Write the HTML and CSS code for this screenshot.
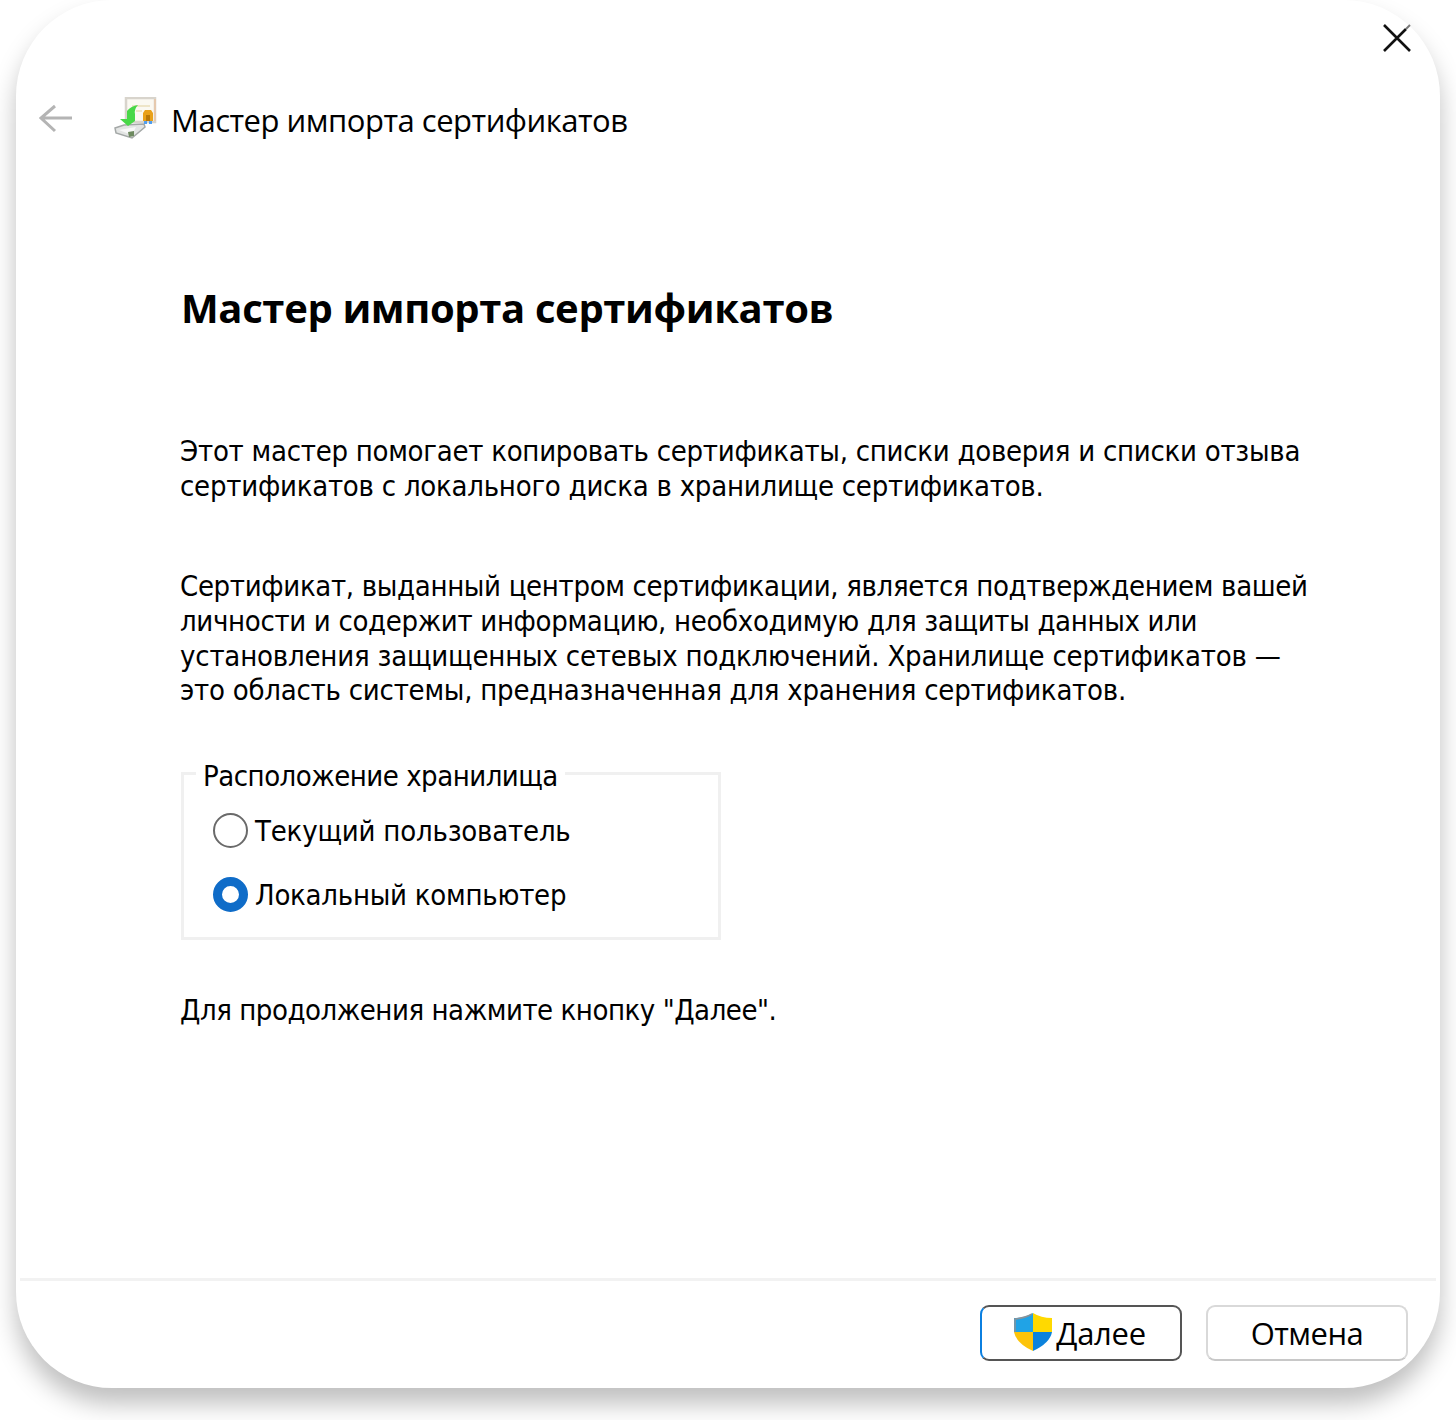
FILE: index.html
```html
<!DOCTYPE html>
<html lang="ru">
<head>
<meta charset="utf-8">
<title>Мастер импорта сертификатов</title>
<link rel="stylesheet" href="styles.css">
</head>
<body>
<main class="dialog">
  <div class="titlebar">
    <svg class="close" viewBox="0 0 28 28"><path d="M1 1L27 27M23 5L1 27"/><path class="tip" d="M23 5L27 1"/></svg>
  </div>
  <header class="header">
    <svg class="back" viewBox="0 0 34 30"><path d="M16 2L2 14L16 27M2 14H33"/></svg>
    <svg class="cert" viewBox="0 0 44 44">
      <path d="M12 1H41V25H12Z" fill="#fbf9f2" stroke="#d8d4cc" stroke-width="2.5"/>
      <path d="M41 2V24" stroke="#e6c9ae" stroke-width="2"/>
      <path d="M18 9H36M22 14H28" stroke="#eee5c8" stroke-width="2"/>
      <path d="M1 31L10 28L30 27L31 30L18 41L2 36Z" fill="#e3e5e4" stroke="#a4a8a7" stroke-width="1.5"/>
      <path d="M5 33L22 30L18 38Z" fill="#f8f8f8"/>
      <path d="M14 35L20 34L20 39L15 40Z" fill="#6e8a60"/>
      <path d="M24 8Q17 9 13 14V22H6L14 29L21 24V17Q20 12 24 8Z" fill="#48d848"/>
      <path d="M30 24H33V27H30ZM35 24H38V27H35Z" fill="#4f9ef0"/>
      <path d="M29 16L31 13H37L39 16V24H29Z" fill="#e9a11a"/>
      <path d="M32 18H36V24H32Z" fill="#b87808"/>
    </svg>
    <span class="caption">Мастер импорта сертификатов</span>
  </header>
  <section class="content">
    <h1 class="heading">Мастер импорта сертификатов</h1>
    <p class="text intro"><span class="fit-27">Этот мастер помогает копировать сертификаты, списки доверия и списки отзыва</span><br><span class="fit-24">сертификатов с локального диска в хранилище сертификатов.</span></p>
    <p class="text about"><span class="fit-33">Сертификат, выданный центром сертификации, является подтверждением вашей</span><br><span class="fit-33">личности и содержит информацию, необходимую для защиты данных или</span><br><span class="fit-20">установления защищенных сетевых подключений. Хранилище сертификатов —</span><br><span class="fit-24">это область системы, предназначенная для хранения сертификатов.</span></p>
    <fieldset class="group">
      <legend class="legend fit-50">Расположение хранилища</legend>
      <label class="option"><span class="radio"></span><span class="fit-20">Текущий пользователь</span></label>
      <label class="option"><span class="radio checked"></span><span class="fit-24">Локальный компьютер</span></label>
    </fieldset>
    <p class="text hint"><span class="fit-46">Для продолжения нажмите кнопку "Далее".</span></p>
  </section>
  <footer class="footer">
    <button class="button primary">
      <svg class="shield" viewBox="0 0 38 38">
        <path d="M19 0Q11 5 0 5V19H19Z" fill="#20a3e6"/>
        <path d="M19 0Q27 5 38 5V19H19Z" fill="#ffd900"/>
        <path d="M0 19H19V38Q2 30 0 19Z" fill="#fdc40a"/>
        <path d="M38 19H19V38Q36 30 38 19Z" fill="#0b82dc"/>
        <path d="M1 19V6Q11 5 18 1" fill="none" stroke="#8a9298" stroke-width="1.5"/>
      </svg>
      <span class="next">Далее</span>
    </button>
    <button class="button"><span class="cancel">Отмена</span></button>
  </footer>
</main>
</body>
</html>
```
FILE: styles.css
```css
* { box-sizing: border-box; }
body {
  margin: 0;
  height: 1420px;
  padding: 0 16px;
  background: #fff;
  color: #000;
  font-family: "Open Sans", "Noto Sans", sans-serif;
  overflow: hidden;
}
.dialog {
  display: flex;
  flex-direction: column;
  height: 1388px;
  border-radius: 96px;
  background: #fff;
  box-shadow: 0 16px 24px rgba(0, 0, 0, 0.25);
}
.titlebar {
  display: flex;
  justify-content: flex-end;
  height: 92px;
  padding: 24px 29px 0 0;
}
.close { width: 28px; height: 28px; fill: none; stroke: #111; stroke-width: 2.6; }
.tip { stroke: #777; stroke-width: 2; }
.header {
  display: flex;
  align-items: center;
  height: 54px;
  padding-left: 23px;
}
.back { width: 34px; height: 30px; fill: none; stroke: #b4b4b4; stroke-width: 3; }
.cert { width: 44px; height: 44px; margin-left: 41px; }
.caption { margin-left: 13px; padding-top: 1px; font-size: 31px; line-height: 54px; letter-spacing: -0.49px; white-space: nowrap; }
.content { flex: 1; padding: 134px 0 0 164px; }
.heading { margin: 0 0 0 1px; font-size: 40px; font-weight: 700; line-height: 56px; letter-spacing: -0.36px; white-space: nowrap; }
.text, .group {
  font-family: "DejaVu Sans Condensed", "DejaVu Sans", sans-serif;
  font-stretch: condensed;
  font-size: 29px;
  line-height: 34.67px;
  white-space: nowrap;
}
.text { margin: 0; }
.intro { margin-top: 98px; }
.about { margin-top: 66px; }

/* Per-line tracking keeps the lines at their intended widths. */
.fit-20 { letter-spacing: -0.2px; }
.fit-24 { letter-spacing: -0.245px; }
.fit-27 { letter-spacing: -0.27px; }
.fit-33 { letter-spacing: -0.335px; }
.fit-46 { letter-spacing: -0.46px; }
.fit-50 { letter-spacing: -0.5px; }

.group {
  width: 540px;
  height: 184px;
  margin: 48px 0 0 1px;
  padding: 8px 0 0 12px;
  border: 3px solid #f0f0f0;
}
.legend { height: 34px; padding: 3px 7px 0; }
.option { display: flex; align-items: center; height: 64px; gap: 7px; padding-left: 17px; }
.option span:last-child { padding-top: 2px; }
.radio { width: 35px; height: 35px; border: 2px solid #6a6a6a; border-radius: 50%; background: #fff; }
.radio.checked { border: 9px solid #0f6cc8; }
.hint { margin-top: 53px; }
.footer {
  display: flex;
  justify-content: flex-end;
  gap: 24px;
  height: 110px;
  margin: 0 4px;
  padding: 24px 28px 0 0;
  border-top: 3px solid #f2f2f2;
}
.button {
  display: flex;
  align-items: center;
  justify-content: center;
  width: 202px;
  height: 56px;
  padding: 0;
  border: 2px solid #d9d9d9;
  border-bottom-color: #c8c8c8;
  border-radius: 9px;
  background: #fff;
  color: #000;
  font: 31px "Open Sans", "Noto Sans", sans-serif;
}
.primary { border-color: #555; border-left-color: #0b7fe0; gap: 4px; padding-right: 2px; }
.shield { width: 38px; height: 38px; margin-bottom: 3px; }
.next { letter-spacing: -0.3px; }
.cancel { letter-spacing: -0.5px; }
```
